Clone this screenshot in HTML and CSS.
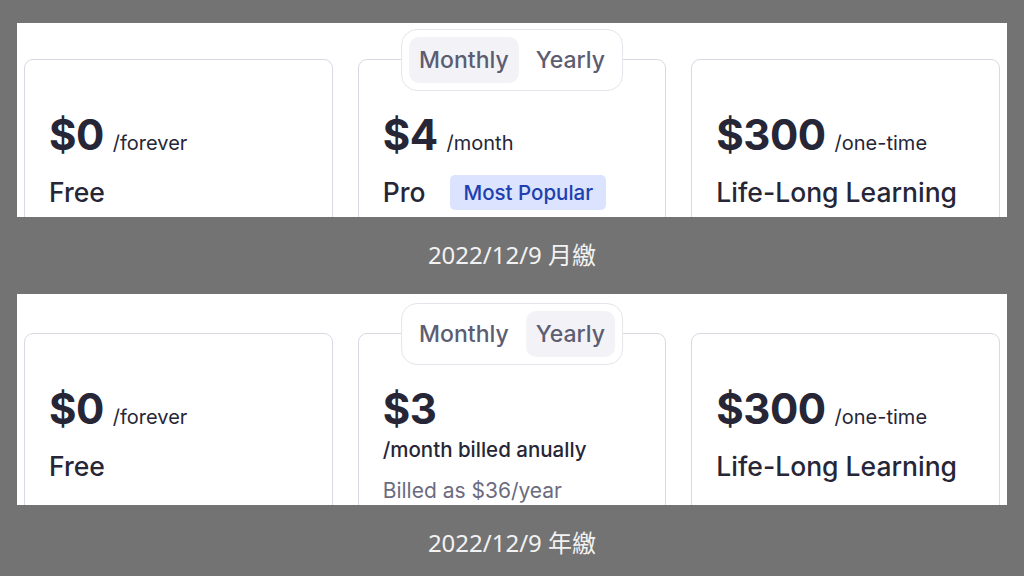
FILE: index.html
```html
<!DOCTYPE html>
<html lang="zh-Hant">
<head>
<meta charset="utf-8">
<title>Pricing</title>
<link rel="stylesheet" href="styles.css">
</head>
<body>
<div class="page">
  <section class="panel panel-monthly">
    <div class="toggle">
      <span class="pill active">Monthly</span>
      <span class="pill">Yearly</span>
    </div>
    <div class="cards">
      <div class="card">
        <div class="price"><span class="amount">$0</span><span class="period">/forever</span></div>
        <div class="name">Free</div>
      </div>
      <div class="card">
        <div class="price"><span class="amount">$4</span><span class="period">/month</span></div>
        <div class="name">Pro <span class="badge">Most Popular</span></div>
      </div>
      <div class="card">
        <div class="price"><span class="amount">$300</span><span class="period">/one-time</span></div>
        <div class="name">Life-Long Learning</div>
      </div>
    </div>
  </section>
  <div class="caption">2022/12/9 月繳</div>
  <section class="panel panel-yearly">
    <div class="toggle">
      <span class="pill">Monthly</span>
      <span class="pill active">Yearly</span>
    </div>
    <div class="cards">
      <div class="card">
        <div class="price"><span class="amount">$0</span><span class="period">/forever</span></div>
        <div class="name">Free</div>
      </div>
      <div class="card">
        <div class="price"><span class="amount">$3</span></div>
        <div class="billed">/month billed anually</div>
        <div class="note">Billed as $36/year</div>
      </div>
      <div class="card">
        <div class="price"><span class="amount">$300</span><span class="period">/one-time</span></div>
        <div class="name">Life-Long Learning</div>
      </div>
    </div>
  </section>
  <div class="caption">2022/12/9 年繳</div>
</div>
</body>
</html>
```
FILE: styles.css
```css
html, body {
  margin: 0;
  padding: 0;
  height: 576px;
  overflow: hidden;
  background: #737373;
}

.page {
  padding-top: 23px;
  display: flex;
  flex-direction: column;
  font-family: Inter, "Noto Sans", sans-serif;
  color: #262636;
}

.panel {
  position: relative;
  margin: 0 17px;
  width: 990px;
  background: #ffffff;
  overflow: hidden;
  box-sizing: border-box;
}

.panel-monthly {
  height: 194px;
  padding-top: 36px;
}

.panel-yearly {
  height: 211px;
  padding-top: 39px;
}

.panel-monthly .toggle { top: 6px; }
.panel-yearly .toggle { top: 9px; }

.toggle {
  position: absolute;
  left: 50%;
  transform: translateX(-50%);
  z-index: 2;
  display: flex;
  gap: 7px;
  padding: 7px;
  background: #ffffff;
  border: 1px solid #e5e5ec;
  border-radius: 16px;
}

.pill {
  height: 46px;
  padding: 0 10px;
  display: flex;
  align-items: center;
  font-size: 23px;
  font-weight: 500;
  color: #5d5d72;
  border-radius: 10px;
}

.pill.active {
  background: #f3f3f7;
}

.cards {
  display: grid;
  grid-template-columns: repeat(3, 1fr);
  gap: 25px;
  padding: 0 7px;
}

.card {
  height: 300px;
  border: 1px solid #d9d9e4;
  border-radius: 9px;
  padding: 54px 24px 0;
  box-sizing: border-box;
}

.price {
  display: flex;
  align-items: baseline;
  line-height: 42px;
  height: 42px;
}

.amount {
  font-size: 42px;
  font-weight: 700;
  letter-spacing: -0.5px;
}

.period {
  font-size: 20px;
  font-weight: 400;
  margin-left: 9px;
}

.name {
  margin-top: 21px;
  display: flex;
  align-items: center;
  font-size: 26.5px;
  font-weight: 500;
  line-height: 31px;
}

.badge {
  margin: -4px 0 -4px 25px;
  height: 35px;
  padding: 0 13px;
  display: flex;
  align-items: center;
  font-size: 20.5px;
  font-weight: 500;
  color: #1e40af;
  background: #dbe3fe;
  border-radius: 5px;
}

.billed {
  margin-top: 8px;
  font-size: 20.5px;
  font-weight: 500;
  line-height: 24px;
}

.note {
  margin-top: 17px;
  font-size: 21px;
  font-weight: 400;
  line-height: 24px;
  color: #6b6b80;
}

.caption {
  height: 77px;
  box-sizing: border-box;
  padding-top: 26px;
  text-align: center;
  font-family: "Noto Sans", "Noto Sans CJK TC", sans-serif;
  font-size: 24px;
  line-height: 24px;
  color: #f2f2f2;
  flex-shrink: 0;
}
```
